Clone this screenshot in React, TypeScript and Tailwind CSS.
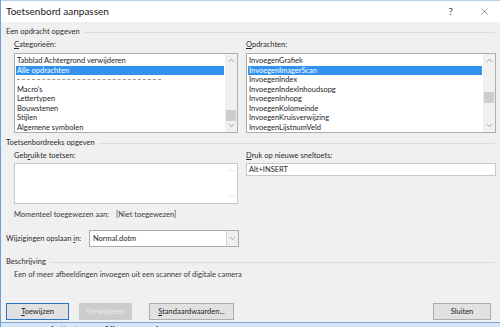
import { X, ChevronUp, ChevronDown } from 'lucide-react'

const CATEGORIES = [
  'Tabblad Achtergrond verwijderen',
  'Alle opdrachten',
  '---',
  "Macro's",
  'Lettertypen',
  'Bouwstenen',
  'Stijlen',
  'Algemene symbolen',
]

const COMMANDS = [
  'InvoegenGrafiek',
  'InvoegenImagerScan',
  'InvoegenIndex',
  'InvoegenIndexInhoudsopg',
  'InvoegenInhopg',
  'InvoegenKolomeinde',
  'InvoegenKruisverwijzing',
  'InvoegenLijstnumVeld',
]

function GroupHeader({ title }: { title: string }) {
  return (
    <div className="flex items-center h-[10px] gap-[4px]">
      <span className="whitespace-nowrap">{title}</span>
      <div className="flex-1 h-px bg-[#dcdcdc]" />
    </div>
  )
}

function ScrollBar({ thumbTop }: { thumbTop: number }) {
  return (
    <div className="w-[12px] h-full bg-[#f0f0f0] flex flex-col items-center justify-between py-[2px] text-[#606060]">
      <ChevronUp className="w-[9px] h-[9px]" strokeWidth={1.5} />
      <div className="flex-1 w-full flex flex-col">
        <div style={{ height: thumbTop }} />
        <div className="mx-[1px] h-[11px] bg-[#cdcdcd]" />
      </div>
      <ChevronDown className="w-[9px] h-[9px]" strokeWidth={1.5} />
    </div>
  )
}

function ListBox({ items, selected, thumbTop }: { items: string[]; selected: number; thumbTop: number }) {
  return (
    <div className="h-[80px] bg-white border border-[#acacac] flex">
      <div className="flex-1 flex flex-col pt-[2px] pl-[1px] pr-[1px]">
        {items.map((item, i) => (
          <div
            key={item}
            className={`h-[9.5px] leading-[9.5px] pl-[1px] whitespace-nowrap ${i === selected ? 'bg-[#3392f0] text-white' : 'text-[#1e1e1e]'}`}
          >
            {item === '---' ? (
              <div className="h-full flex items-center">
                <div className="w-[144px] border-t border-dashed border-[#9a9a9a]" />
              </div>
            ) : (
              item
            )}
          </div>
        ))}
      </div>
      <ScrollBar thumbTop={thumbTop} />
    </div>
  )
}

function Button({ label, under, variant }: { label: string; under?: string; variant?: 'focus' | 'disabled' }) {
  const base = 'h-[17px] flex items-center justify-center border whitespace-nowrap'
  const cls =
    variant === 'focus'
      ? 'border-[#2a73c6] bg-[#e1e1e1] text-[#1e1e1e]'
      : variant === 'disabled'
        ? 'border-[#cccccc] bg-[#cccccc] text-[#ececec]'
        : 'border-[#adadad] bg-[#e1e1e1] text-[#1e1e1e]'
  return (
    <div className={`${base} ${cls}`}>
      {under ? (
        <span>
          <span className="underline">{under}</span>
          {label.slice(under.length)}
        </span>
      ) : (
        label
      )}
    </div>
  )
}

export default function App() {
  return (
    <div
      className="w-[500px] h-[327px] overflow-hidden bg-[#f0f0f0] border-l border-[#6f9fd6] flex flex-col text-[7.5px] text-[#2b2b2b] whitespace-nowrap"
      style={{ fontFamily: 'Lato, "Liberation Sans", sans-serif' }}
    >
      {/* Title bar */}
      <div className="h-[22px] bg-white border-t border-[#b9cfe8] flex items-center pl-[5px] pr-[10px]">
        <span className="flex-1 text-[10px] text-[#1a1a1a]">Toetsenbord aanpassen</span>
        <span className="text-[10px] text-[#444] mr-[26px]">?</span>
        <X className="w-[11px] h-[11px] text-[#333]" strokeWidth={1} />
      </div>

      <div className="flex-1 flex flex-col px-[5px]">
        <div className="mt-[5px]">
          <GroupHeader title="Een opdracht opgeven" />
        </div>

        <div className="pl-[8px] grid grid-cols-[224px_250px] gap-x-[8px]">
          <div className="mt-[3px] h-[10px] leading-[10px]">
            <span className="underline">C</span>ategorieën:
          </div>
          <div className="mt-[3px] h-[10px] leading-[10px]">
            <span className="underline">O</span>pdrachten:
          </div>
          <div className="mt-[3px]">
            <ListBox items={CATEGORIES} selected={1} thumbTop={45} />
          </div>
          <div className="mt-[3px]">
            <ListBox items={COMMANDS} selected={1} thumbTop={27} />
          </div>
        </div>

        <div className="mt-[5px]">
          <GroupHeader title="Toetsenbordreeks opgeven" />
        </div>

        <div className="pl-[8px] grid grid-cols-[224px_250px] gap-x-[8px]">
          <div className="mt-[3px] h-[10px] leading-[10px]">
            Geb<span className="underline">r</span>uikte toetsen:
          </div>
          <div className="mt-[3px] h-[10px] leading-[10px]">
            <span className="underline">D</span>ruk op nieuwe sneltoets:
          </div>
          <div className="mt-[2px] h-[41px] bg-white border border-[#c8c8c8] flex justify-end">
            <div className="w-[12px] flex flex-col items-center justify-between py-[2px] text-[#c4c4c4]">
              <ChevronUp className="w-[9px] h-[9px]" strokeWidth={1.5} />
              <ChevronDown className="w-[9px] h-[9px]" strokeWidth={1.5} />
            </div>
          </div>
          <div className="mt-[2px] h-[13px] bg-white border border-[#c8c8c8] flex items-center pl-[2px] text-[#1e1e1e]">
            Alt+INSERT
          </div>
        </div>

        <div className="pl-[8px] mt-[6px] h-[10px] leading-[10px] flex text-[#3a3a3a]">
          <span className="w-[102px]">Momenteel toegewezen aan:</span>
          <span>[Niet toegewezen]</span>
        </div>

        <div className="mt-[10px] flex items-center h-[17px]">
          <span className="w-[83px]">
            Wijzigingen opslaan <span className="underline">i</span>n:
          </span>
          <div className="w-[150px] h-[17px] bg-white border border-[#acacac] flex items-center">
            <span className="flex-1 pl-[3px] text-[#1e1e1e]">Normal.dotm</span>
            <div className="w-[12px] h-full border-l border-[#d0d0d0] bg-[#f0f0f0] flex items-center justify-center text-[#707070]">
              <ChevronDown className="w-[9px] h-[9px]" strokeWidth={1.5} />
            </div>
          </div>
        </div>

        <div className="mt-[10px]">
          <GroupHeader title="Beschrijving" />
        </div>
        <div className="pl-[8px] mt-[3px] h-[10px] leading-[10px] text-[#3a3a3a]">
          Een of meer afbeeldingen invoegen uit een scanner of digitale camera
        </div>

        <div className="mt-[23px] flex items-center">
          <div className="w-[63px]">
            <Button label="Toewijzen" under="T" variant="focus" />
          </div>
          <div className="w-[53px] ml-[10px]">
            <Button label="Verwijderen" variant="disabled" />
          </div>
          <div className="w-[85px] ml-[17px]">
            <Button label="Standaardwaarden..." under="S" />
          </div>
          <div className="flex-1" />
          <div className="w-[58px] mr-[4px]">
            <Button label="Sluiten" />
          </div>
        </div>
      </div>

      {/* Background window peeking below */}
      <div className="h-[5px] border-t border-[#7aa6d8] bg-[#d6e6f7] flex items-start overflow-hidden pl-[50px] gap-[6px]">
        <span className="text-[9px] font-bold leading-[12px] text-[#222] mt-[1px]">Lettertypen</span>
        <span className="text-[9px] font-bold leading-[12px] text-[#222] mt-[1px]">Alineaopmaak</span>
      </div>
    </div>
  )
}
